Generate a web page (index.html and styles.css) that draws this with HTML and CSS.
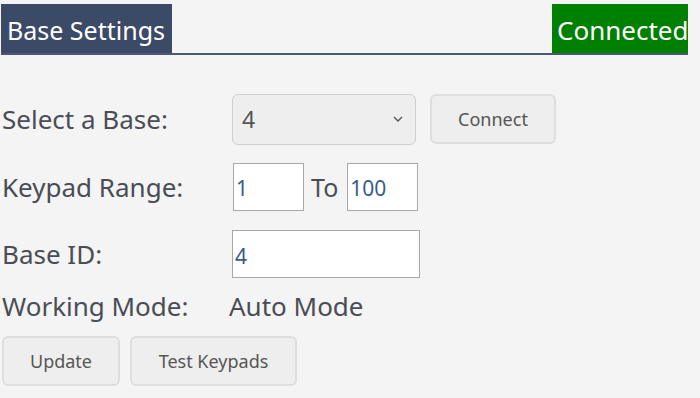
FILE: index.html
```html
<!DOCTYPE html>
<html lang="en">
<head>
    <meta charset="UTF-8">
    <title>Base Settings</title>
    <link rel="stylesheet" href="styles.css">
</head>
<body>
    <div class="panel">
        <div class="panel-header">
            <div class="title">Base Settings</div>
            <div class="status">Connected</div>
        </div>

        <div class="form">
            <div class="row row-select">
                <label class="label">Select a Base:</label>
                <div class="field">
                    <div class="select">
                        <span>4</span>
                        <svg width="10" height="6" viewBox="0 0 10 6"><path d="M1 1l4 4 4-4" fill="none" stroke="#555" stroke-width="1.4"/></svg>
                    </div>
                    <button class="btn btn-connect">Connect</button>
                </div>
            </div>
            <div class="row row-range">
                <label class="label">Keypad Range:</label>
                <div class="field">
                    <input class="input input-small" type="text" value="1">
                    <span class="to">To</span>
                    <input class="input input-small" type="text" value="100">
                </div>
            </div>
            <div class="row row-id">
                <label class="label">Base ID:</label>
                <div class="field">
                    <input class="input input-wide" type="text" value="4">
                </div>
            </div>
            <div class="row row-mode">
                <span class="label">Working Mode:</span>
                <span class="value">Auto Mode</span>
            </div>
            <div class="actions">
                <button class="btn btn-update">Update</button>
                <button class="btn btn-test">Test Keypads</button>
            </div>
        </div>
    </div>
</body>
</html>
```

FILE: styles.css
```css
* {
    box-sizing: border-box;
}

body {
    margin: 0;
    background-color: #f4f4f4;
    font-family: 'Noto Sans', 'Open Sans', sans-serif;
    color: #4a4d55;
}

.panel {
    padding: 4px 12px 0 1px;
}

.panel-header {
    display: flex;
    justify-content: space-between;
    border-bottom: 2px solid #4c5872;
}

.title,
.status {
    height: 49px;
    line-height: 52px;
    font-size: 25px;
    color: #fff;
    white-space: nowrap;
}

.title {
    background-color: #3b4a66;
    width: 171px;
    padding-left: 6px;
}

.status {
    background-color: #008000;
    width: 136px;
    padding-left: 5px;
    font-size: 26px;
}

.form {
    padding: 38px 0 0 1px;
}

.row {
    display: flex;
    align-items: center;
}

.label {
    width: 229px;
    font-size: 26px;
    flex-shrink: 0;
    white-space: nowrap;
}

.field {
    display: flex;
    align-items: center;
}

.row-select {
    height: 52px;
}

.row-range {
    height: 49px;
    margin-top: 17px;
}

.row-id {
    height: 48px;
    margin-top: 19px;
}

.row-mode {
    height: 30px;
    margin-top: 13px;
}

.value {
    font-size: 26px;
    margin-left: -2px;
}

.select {
    width: 184px;
    height: 51px;
    border: 1px solid #cfcfcf;
    border-radius: 6px;
    background-color: #eeeeee;
    display: flex;
    align-items: center;
    justify-content: space-between;
    padding: 0 12px 0 9px;
    font-size: 23px;
    color: #555;
    margin-left: 1px;
}

.btn {
    font-family: 'Noto Sans', 'Open Sans', sans-serif;
    font-size: 18px;
    color: #555;
    background-color: #eeeeee;
    border: 2px solid #dedede;
    border-radius: 6px;
    height: 50px;
    padding: 0;
}

.btn-connect {
    width: 126px;
    margin-left: 14px;
}

.input {
    height: 48px;
    border: 1px solid #a8a8a8;
    background-color: #fff;
    font-family: 'Noto Sans', 'Open Sans', sans-serif;
    font-size: 21px;
    color: #3a5a8a;
    padding: 3px 2px 0 2px;
    margin: 0;
    outline: none;
}

.input-small {
    width: 71px;
    margin-left: 2px;
}

.to {
    font-size: 25px;
    margin: 0 9px 0 7px;
}

.to + .input {
    margin-left: 0;
}

.input-wide {
    width: 188px;
    margin-left: 1px;
}

.actions {
    display: flex;
    gap: 10px;
    margin-top: 15px;
    margin-left: 0;
}

.btn-update {
    width: 118px;
}

.btn-test {
    width: 167px;
}
```
